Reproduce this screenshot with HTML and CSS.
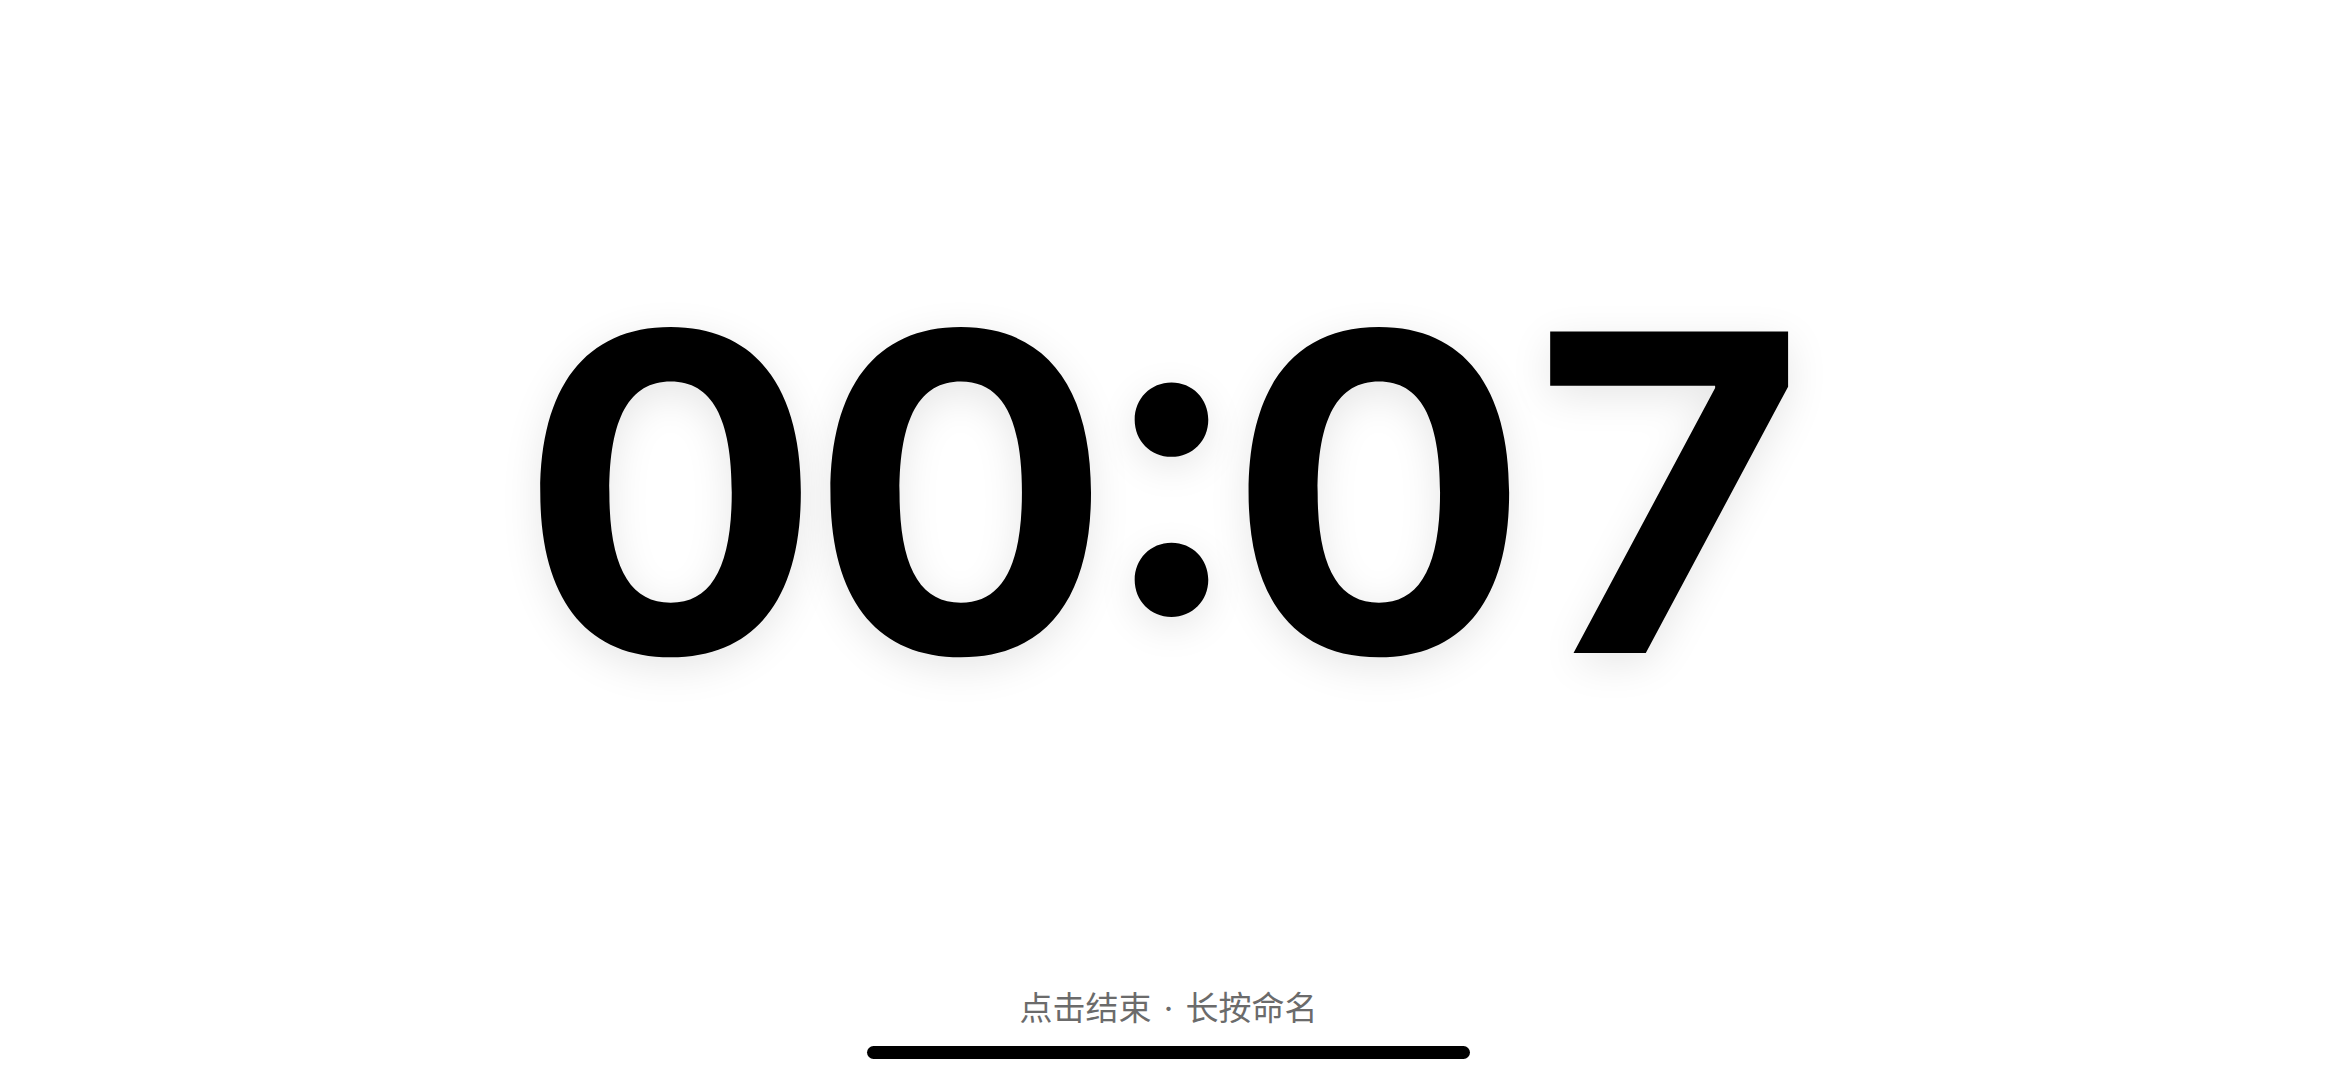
FILE: index.html
```html
<!DOCTYPE html>
<html lang="zh-CN">
<head>
<meta charset="utf-8">
<title>计时</title>
<link rel="stylesheet" href="styles.css">
</head>
<body>
<main class="screen">
  <section class="timer-area">
    <div class="timer">00<span class="colon">:</span>07</div>
  </section>
  <p class="hint">点击结束<span class="sep"> · </span>长按命名</p>
  <div class="home-indicator"></div>
</main>
</body>
</html>
```

FILE: styles.css
```css
html, body {
  margin: 0;
  padding: 0;
  background: #ffffff;
}

.screen {
  width: 100vw;
  height: 100vh;
  display: flex;
  flex-direction: column;
  align-items: center;
  overflow: hidden;
}

.timer-area {
  height: 960px;
  width: 100%;
  display: flex;
  align-items: flex-start;
  justify-content: center;
  padding-top: 272px;
  box-sizing: border-box;
}

.timer {
  font-family: Inter, "Liberation Sans", sans-serif;
  font-weight: 700;
  font-size: 442px;
  line-height: 1;
  color: #000;
  font-variant-numeric: tabular-nums;
  letter-spacing: -12px;
  padding-right: 10px;
  transform: scaleX(1.06);
  text-shadow: 0 10px 40px rgba(0, 0, 0, 0.10);
}

.colon {
  display: inline-block;
  font-feature-settings: "case" 1;
  margin: 0 6px 0 8px;
  transform: scaleX(0.93);
}

.hint {
  margin: 30px 0 0;
  font-family: "Noto Sans CJK SC", "Noto Sans", sans-serif;
  font-size: 33px;
  line-height: 1;
  color: #6b6b6b;
}

.sep {
  font-family: Inter, "Noto Sans", sans-serif;
  margin: 0 3px;
}

.home-indicator {
  margin-top: 21px;
  width: 603px;
  height: 13px;
  border-radius: 7px;
  background: #000;
}
```
